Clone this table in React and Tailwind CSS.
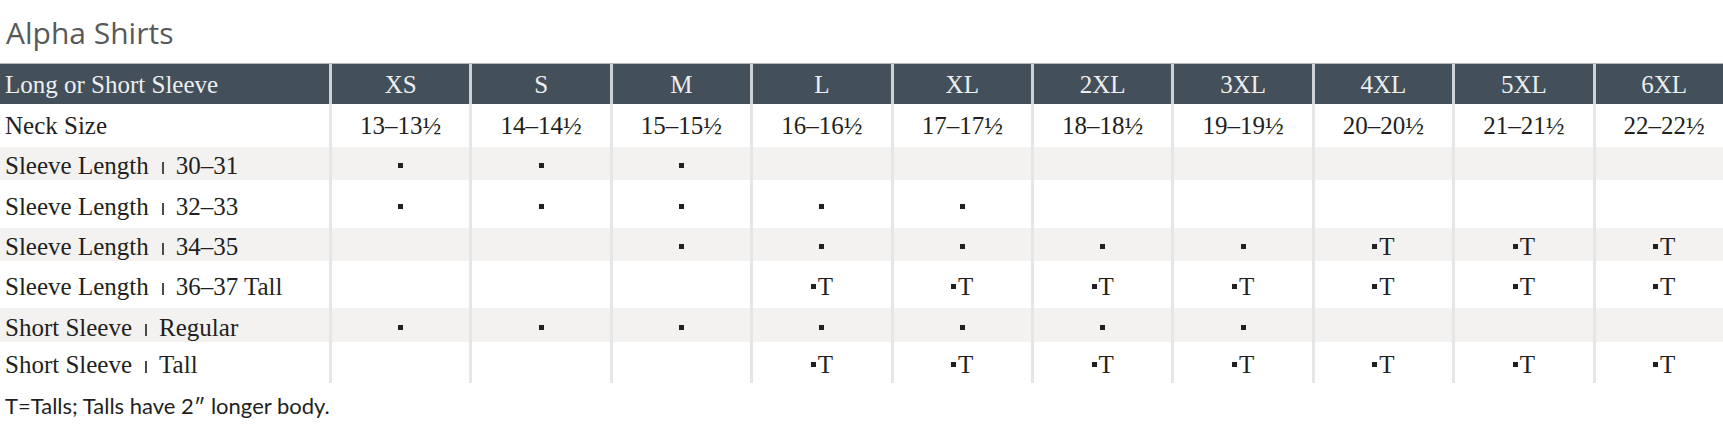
import React from "react";

const SIZES = ["XS", "S", "M", "L", "XL", "2XL", "3XL", "4XL", "5XL", "6XL"];
const NECK = [
  "13–13½",
  "14–14½",
  "15–15½",
  "16–16½",
  "17–17½",
  "18–18½",
  "19–19½",
  "20–20½",
  "21–21½",
  "22–22½",
];

// s = square, t = square + T (tall), - = empty
const ROWS = [
  { a: "Sleeve Length", b: "30–31", cells: "sss-------", h: "h-[33px]", gray: true },
  { a: "Sleeve Length", b: "32–33", cells: "sssss-----", h: "h-[48px]", gray: false },
  { a: "Sleeve Length", b: "34–35", cells: "--sssssttt", h: "h-[33px]", gray: true },
  { a: "Sleeve Length", b: "36–37 Tall", cells: "---ttttttt", h: "h-[47px]", gray: false },
  { a: "Short Sleeve", b: "Regular", cells: "sssssss---", h: "h-[34px]", gray: true },
  { a: "Short Sleeve", b: "Tall", cells: "---ttttttt", h: "h-[41px]", gray: false },
];

const serif = "font-['Liberation_Serif',serif] text-[25px] leading-none text-[#231f20]";

function Square() {
  return <span className="inline-block w-[5px] h-[5px] bg-[#231f20]" />;
}

function Mark({ kind }) {
  if (kind === "s") return <Square />;
  if (kind === "t")
    return (
      <span className="inline-flex items-center gap-[2px]">
        <Square />
        <span>T</span>
      </span>
    );
  return null;
}

export default function App() {
  return (
    <div className="w-[1723px] h-[440px] overflow-hidden bg-white">
      <div className="h-[63px] pt-[18px] pl-[6px] font-['Open_Sans',sans-serif] text-[30px] leading-[30px] text-[#58595b]">
        Alpha Shirts
      </div>

      <div className="w-[1733px]">
        {/* header */}
        <div className="grid grid-cols-[329px_repeat(10,140.4px)] h-[41px] border-t border-[#b3b9bd] bg-[#43505a] text-[#eceef0] font-['Liberation_Serif',serif] text-[25px] leading-none">
          <div className="flex items-center pl-[5px]">Long or Short Sleeve</div>
          {SIZES.map((s) => (
            <div key={s} className="flex items-center justify-center border-l-[3px] border-[#cdd2d5]">
              {s}
            </div>
          ))}
        </div>

        {/* neck size */}
        <div className={`grid grid-cols-[329px_repeat(10,140.4px)] h-[43px] ${serif}`}>
          <div className="flex items-center pl-[5px]">Neck Size</div>
          {NECK.map((n) => (
            <div key={n} className="flex items-center justify-center border-l-[3px] border-[#e6e6e6]">
              {n}
            </div>
          ))}
        </div>

        {ROWS.map((r, i) => (
          <div
            key={i}
            className={`grid grid-cols-[329px_repeat(10,140.4px)] ${r.h} ${r.gray ? "bg-[#f3f2f0]" : "bg-white"} ${serif}`}
          >
            <div className="flex items-center pl-[5px] pt-[4px] whitespace-nowrap">
              <span>
                {r.a}
                <span className="inline-block w-[2px] h-[12px] bg-[#4a4a4a] ml-[13px] mr-[12px]" />
                {r.b}
              </span>
            </div>
            {r.cells.split("").map((c, j) => (
              <div key={j} className="flex items-center justify-center pt-[4px] border-l-[3px] border-[#e6e6e6]">
                <Mark kind={c} />
              </div>
            ))}
          </div>
        ))}
      </div>

      <div className="mt-[12px] pl-[5px] font-['Lato',sans-serif] text-[22px] leading-[22px] text-[#231f20]">
        T=Talls; Talls have 2″ longer body.
      </div>
    </div>
  );
}
